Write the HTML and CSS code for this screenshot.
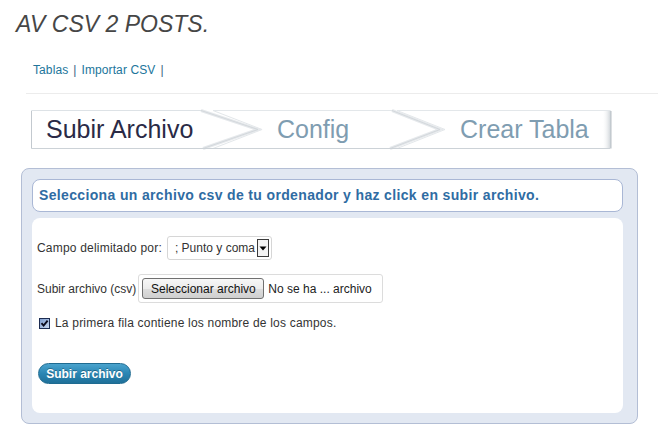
FILE: index.html
```html
<!DOCTYPE html>
<html lang="es">
<head>
<meta charset="utf-8">
<title>AV CSV 2 POSTS</title>
<link rel="stylesheet" href="styles.css">
</head>
<body>
<h1 class="title">AV CSV 2 POSTS.</h1>
<nav class="subnav"><a href="#">Tablas</a><span class="sep">|</span><a href="#">Importar CSV</a><span class="sep">|</span></nav>
<hr class="rule">
<div class="steps">
  <svg class="steps-bg" width="582" height="40" viewBox="0 0 582 40">
    <defs>
      <linearGradient id="rshade" x1="0" y1="0" x2="1" y2="0">
        <stop offset="0" stop-color="#ffffff" stop-opacity="0"/>
        <stop offset="1" stop-color="#c9cfd4"/>
      </linearGradient>
    </defs>
    <polygon points="366,0.5 579.5,0.5 579.5,38.5 366,38.5 414,19.5" fill="#fff" stroke="#e3e7ea"/>
    <rect x="571" y="1" width="9" height="37" fill="url(#rshade)"/>
    <line x1="580" y1="1" x2="580" y2="38.5" stroke="#b9c0c6"/>
    <polygon points="182,0.5 361,0.5 409,19.5 359,38.5 182,38.5 231,19.5" fill="#fff" stroke="#e3e7ea"/>
    <polyline points="361,0.5 409,19.5 359,38.5" fill="none" stroke="#e6e9ec" stroke-width="3"/>
    <polyline points="361,0.5 409,19.5 359,38.5" fill="none" stroke="#d3d8dc"/>
    <polygon points="0.5,0.5 170,0.5 227,19.5 172,38.5 0.5,38.5" fill="#fff" stroke="#dde2e6"/>
    <polyline points="170,0.5 227,19.5 172,38.5" fill="none" stroke="#e6e9ec" stroke-width="3"/>
    <polyline points="170,0.5 227,19.5 172,38.5" fill="none" stroke="#d3d8dc"/>
    <line x1="0.5" y1="1" x2="0.5" y2="38.5" stroke="#c3c9cf"/>
    <line x1="1" y1="38.5" x2="579" y2="38.5" stroke="#ccd2d7"/>
  </svg>
  <div class="step current">Subir Archivo</div>
  <div class="step">Config</div>
  <div class="step">Crear Tabla</div>
</div>
<section class="panel">
  <div class="panel-head">Selecciona un archivo csv de tu ordenador y haz click en subir archivo.</div>
  <form class="panel-body">
    <div class="row row-select">
      <span class="label wide">Campo delimitado por:</span>
      <div class="select">
        <span class="select-value">; Punto y coma</span>
        <span class="select-arrow"><svg width="8" height="5" viewBox="0 0 8 5"><polygon points="0.5,0.5 7.5,0.5 4,4.5" fill="#000"/></svg></span>
      </div>
    </div>
    <div class="row row-file">
      <span class="label">Subir archivo (csv)</span>
      <div class="file">
        <span class="file-btn">Seleccionar archivo</span>
        <span class="file-name">No se ha ... archivo</span>
      </div>
    </div>
    <div class="row row-check">
      <span class="checkbox"><svg width="9" height="9" viewBox="0 0 9 9"><path d="M1.5 4.2 L3.6 6.6 L7.6 1.6" fill="none" stroke="#0b0b1e" stroke-width="1.9"/></svg></span>
      <span class="label wide">La primera fila contiene los nombre de los campos.</span>
    </div>
    <div class="actions"><button type="button" class="btn-primary">Subir archivo</button></div>
  </form>
</section>
</body>
</html>
```
FILE: styles.css
```css
* { box-sizing: border-box; }
html, body { margin: 0; background: #fff; }
body {
  font-family: "Liberation Sans", Arial, sans-serif;
  font-size: 12px;
  color: #333;
  width: 658px;
  height: 437px;
  overflow: hidden;
}
.title {
  margin: 0;
  padding: 11px 0 0 16px;
  font-size: 23px;
  font-style: italic;
  font-weight: normal;
  line-height: 26px;
  color: #464646;
}
.subnav {
  margin: 26px 0 0 33px;
  line-height: 14px;
  font-size: 12px;
  letter-spacing: 0.1px;
}
.subnav a { color: #21759b; text-decoration: none; }
.subnav .sep { margin: 0 5px; color: #3b6482; }
.rule {
  margin: 16px 0 0 26px;
  border: 0;
  height: 1px;
  background: #ececec;
}
.steps {
  position: relative;
  margin: 16px 0 0 31px;
  width: 582px;
  height: 39px;
  display: grid;
  grid-template-columns: 231px 183px 1fr;
}
.steps-bg { position: absolute; left: 0; top: 0; overflow: visible; }
.step {
  position: relative;
  padding-left: 15px;
  font-size: 25px;
  line-height: 39px;
  color: #7f9db1;
  white-space: nowrap;
}
.step.current { color: #2a2a46; }
.panel {
  margin: 19px 0 0 21px;
  width: 617px;
  padding: 10px 14px 10px 10px;
  background: #e2e8f2;
  border: 1px solid #b3bed5;
  border-radius: 8px;
  display: flex;
  flex-direction: column;
  gap: 6px;
}
.panel-head {
  height: 33px;
  padding-left: 6px;
  background: #fff;
  border: 1px solid #a9b7d5;
  border-radius: 8px;
  font-size: 14px;
  font-weight: bold;
  letter-spacing: 0.35px;
  line-height: 31px;
  color: #2f6ca3;
  white-space: nowrap;
}
.panel-body {
  margin: 0;
  height: 195px;
  padding: 18px 5px 0 5px;
  background: #fff;
  border-radius: 8px;
  display: flex;
  flex-direction: column;
}
.row { display: flex; align-items: center; white-space: nowrap; }
.label.wide { letter-spacing: 0.2px; }
.row-select { height: 24px; gap: 5px; }
.row-file { height: 29px; gap: 2px; margin-top: 14px; }
.row-check { height: 14px; gap: 5px; margin-top: 13px; padding-left: 2px; }
.select {
  width: 105px;
  height: 24px;
  border: 1px solid #d6d6d6;
  border-radius: 3px;
  padding: 0 2px 0 7px;
  display: flex;
  align-items: center;
  justify-content: space-between;
}
.select-arrow {
  width: 12px;
  height: 18px;
  border: 1px solid #3a3a3a;
  background: #f3f3f3;
  display: flex;
  align-items: center;
  justify-content: center;
}
.file {
  width: 245px;
  height: 29px;
  border: 1px solid #dcdcdc;
  border-radius: 3px;
  padding: 0 3px;
  display: flex;
  align-items: center;
  gap: 4px;
}
.file-btn {
  width: 122px;
  height: 21px;
  border: 1px solid #707070;
  border-radius: 3px;
  background: linear-gradient(#f7f7f7, #ececec 50%, #dddddd 51%, #cfcfcf);
  display: flex;
  align-items: center;
  justify-content: center;
  color: #111;
}
.file-name { color: #222; }
.checkbox {
  width: 11px;
  height: 11px;
  border: 1px solid #1c2c52;
  background: linear-gradient(135deg, #7f9ed0, #c9d8ee);
  display: flex;
  align-items: center;
  justify-content: center;
}
.actions { margin-top: 33px; padding-left: 1px; }
.btn-primary {
  width: 93px;
  height: 21px;
  padding: 0;
  border: 1px solid #1f6b91;
  border-radius: 11px;
  background: linear-gradient(#4aa3cd, #2a86b4 50%, #1f7099);
  color: #fff;
  font-family: "Liberation Sans", Arial, sans-serif;
  font-size: 12px;
  font-weight: bold;
  text-shadow: 0 -1px 0 rgba(0, 0, 0, 0.3);
}
```
